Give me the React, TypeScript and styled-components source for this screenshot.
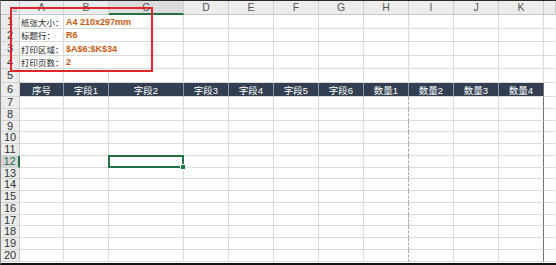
import React from "react";
import styled, { createGlobalStyle, css } from "styled-components";

const GlobalStyle = createGlobalStyle`
  html, body { margin: 0; padding: 0; background: #fff; }
  body { width: 556px; height: 265px; overflow: hidden; }
`;

const COLS = ["A", "B", "C", "D", "E", "F", "G", "H", "I", "J", "K"];
const WIDTHS = [44, 45, 75, 45, 45, 45, 45, 45, 45, 45, 45];
const HEIGHTS = [14, 13, 14, 13, 14, 14, 12, 12, 11, 12, 12, 12, 11, 12, 12, 12, 11, 12, 12, 12];
const TITLES = ["序号", "字段1", "字段2", "字段3", "字段4", "字段5", "字段6", "数量1", "数量2", "数量3", "数量4"];
const INFO = [
  ["纸张大小：", "A4 210x297mm"],
  ["标题行：", "R6"],
  ["打印区域：", "$A$6:$K$34"],
  ["打印页数：", "2"],
];
const SELECTED = { row: 12, col: 2 };

const Frame = styled.div`
  width: 556px;
  height: 265px;
  box-sizing: border-box;
  border-top: 1px solid #2a2a2a;
  border-bottom: 2px solid #111;
  border-left: 1px solid #8a8a8a;
  overflow: hidden;
  position: relative;
  font-family: "Liberation Sans", "Noto Sans CJK SC", sans-serif;
`;

const Sheet = styled.div<{ $cols: string; $rows: string }>`
  display: grid;
  grid-template-columns: ${(p) => p.$cols};
  grid-template-rows: ${(p) => p.$rows};
  background: #fff;
`;

const Corner = styled.div`
  position: relative;
  background: #ececec;
  border-right: 1px solid #c9c9c9;
  border-bottom: 1px solid #c6c6c6;
  box-sizing: border-box;
  &::after {
    content: "";
    position: absolute;
    right: 2px;
    bottom: 2px;
    border-style: solid;
    border-width: 0 0 6px 6px;
    border-color: transparent transparent #c4c4c4 transparent;
  }
`;

const ColHead = styled.div<{ $active?: boolean }>`
  display: flex;
  align-items: center;
  justify-content: center;
  box-sizing: border-box;
  background: ${(p) => (p.$active ? "#dcdcdc" : "#ececec")};
  border-right: 1px solid #cdcdcd;
  border-bottom: ${(p) => (p.$active ? "2px solid #217346" : "1px solid #c6c6c6")};
  color: #555;
  font-size: 10.5px;
  line-height: 1;
`;

const RowHead = styled.div<{ $active?: boolean }>`
  display: flex;
  align-items: center;
  justify-content: center;
  box-sizing: border-box;
  background: ${(p) => (p.$active ? "#d6d6d6" : "#ececec")};
  border-right: ${(p) => (p.$active ? "2px solid #217346" : "1px solid #c9c9c9")};
  border-bottom: 1px solid #d2d2d2;
  color: ${(p) => (p.$active ? "#217346" : "#333")};
  font-size: 11px;
  line-height: 1;
`;

type Edge = "grid" | "none" | "dash" | "print" | "title";

const edge = (e: Edge) => {
  switch (e) {
    case "none":
      return "1px solid transparent";
    case "dash":
      return "1px dashed #a8a8a8";
    case "print":
      return "1px solid #6f6f6f";
    case "title":
      return "1px solid #8c929b";
    default:
      return "1px solid #dadada";
  }
};

const Cell = styled.div<{ $right: Edge; $title?: boolean; $selected?: boolean }>`
  box-sizing: border-box;
  display: flex;
  align-items: center;
  border-right: ${(p) => edge(p.$right)};
  border-bottom: 1px solid #dadada;
  white-space: nowrap;
  min-width: 0;
  ${(p) =>
    p.$title &&
    css`
      background: #333f50;
      justify-content: center;
      color: #fff;
      font-size: 9.5px;
    `}
  ${(p) => p.$selected && css`position: relative;`}
`;

const Label = styled.span`
  padding-left: 1px;
  font-family: "Noto Sans CJK SC", sans-serif;
  font-size: 8.5px;
  color: #1e1e1e;
`;

const Value = styled.span`
  padding-left: 2px;
  font-size: 9px;
  font-weight: bold;
  color: #c55a11;
`;

const Selection = styled.div`
  position: absolute;
  left: -1px;
  top: -1px;
  right: -1px;
  bottom: -1px;
  border: 2px solid #217346;
  &::after {
    content: "";
    position: absolute;
    right: -4px;
    bottom: -4px;
    width: 4px;
    height: 4px;
    background: #217346;
    border: 1px solid #fff;
  }
`;

const Annotation = styled.div`
  position: absolute;
  left: 9px;
  top: 6px;
  width: 143px;
  height: 65px;
  box-sizing: border-box;
  border: 2px solid #e0262b;
  pointer-events: none;
`;

function rightEdge(row: number, col: number): Edge {
  if (row <= 4 && col === 1) return "none";
  if (row === 6) return col === 10 ? "print" : "title";
  if (row >= 7 && col === 7) return "dash";
  if (row >= 7 && col === 10) return "print";
  return "grid";
}

function cellContent(row: number, col: number) {
  if (row <= 4 && col === 0) return <Label>{INFO[row - 1][0]}</Label>;
  if (row <= 4 && col === 1) return <Value>{INFO[row - 1][1]}</Value>;
  if (row === 6) return TITLES[col];
  return null;
}

export default function App() {
  const cols = `19px ${WIDTHS.map((w) => `${w}px`).join(" ")} 1fr`;
  const rows = `14px ${HEIGHTS.map((h) => `${h}px`).join(" ")}`;

  return (
    <>
      <GlobalStyle />
      <Frame>
        <Sheet $cols={cols} $rows={rows}>
          <Corner />
          {COLS.map((c, i) => (
            <ColHead key={c} $active={i === SELECTED.col}>
              {c}
            </ColHead>
          ))}
          <ColHead />
          {HEIGHTS.map((_, r) => {
            const row = r + 1;
            return (
              <React.Fragment key={row}>
                <RowHead $active={row === SELECTED.row}>{row}</RowHead>
                {COLS.map((c, col) => {
                  const selected = row === SELECTED.row && col === SELECTED.col;
                  return (
                    <Cell
                      key={c}
                      $right={rightEdge(row, col)}
                      $title={row === 6}
                      $selected={selected}
                    >
                      {cellContent(row, col)}
                      {selected && <Selection />}
                    </Cell>
                  );
                })}
                <Cell $right="none" />
              </React.Fragment>
            );
          })}
        </Sheet>
        <Annotation />
      </Frame>
    </>
  );
}
